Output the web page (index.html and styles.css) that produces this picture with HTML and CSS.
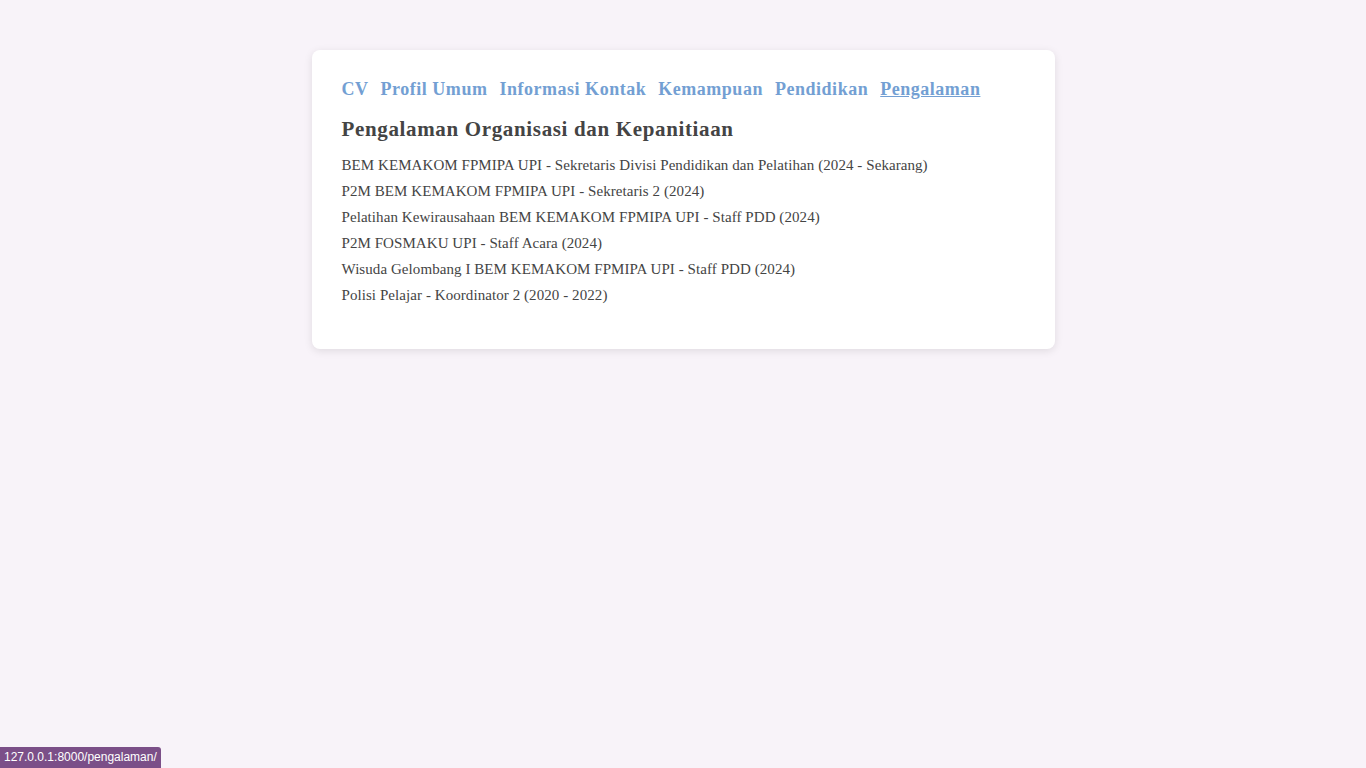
FILE: index.html
```html
<!DOCTYPE html>
<html lang="id">
<head>
<meta charset="utf-8">
<title>Pengalaman</title>
<link rel="stylesheet" href="styles.css">
</head>
<body>
<main class="card">
  <nav class="nav">
    <a href="#">CV</a>
    <a href="#">Profil Umum</a>
    <a href="#">Informasi Kontak</a>
    <a href="#">Kemampuan</a>
    <a href="#">Pendidikan</a>
    <a href="#" class="active">Pengalaman</a>
  </nav>
  <h2 class="title">Pengalaman Organisasi dan Kepanitiaan</h2>
  <ul class="list">
    <li>BEM KEMAKOM FPMIPA UPI - Sekretaris Divisi Pendidikan dan Pelatihan (2024 - Sekarang)</li>
    <li>P2M BEM KEMAKOM FPMIPA UPI - Sekretaris 2 (2024)</li>
    <li>Pelatihan Kewirausahaan BEM KEMAKOM FPMIPA UPI - Staff PDD (2024)</li>
    <li>P2M FOSMAKU UPI - Staff Acara (2024)</li>
    <li>Wisuda Gelombang I BEM KEMAKOM FPMIPA UPI - Staff PDD (2024)</li>
    <li>Polisi Pelajar - Koordinator 2 (2020 - 2022)</li>
  </ul>
</main>
<div class="status">127.0.0.1:8000/pengalaman/</div>
</body>
</html>
```
FILE: styles.css
```css
html, body {
  margin: 0;
  padding: 0;
}
body {
  background: #f8f3f9;
  font-family: "Liberation Serif", Georgia, serif;
  color: #444;
  min-height: 768px;
}
.card {
  width: 743px;
  box-sizing: border-box;
  margin: 50px auto 0;
  background: #fff;
  border-radius: 8px;
  box-shadow: 0 2px 8px rgba(0, 0, 0, 0.1);
  padding: 28px 29px 41px 30px;
}
.nav {
  display: flex;
  gap: 12px;
  font-weight: bold;
  font-size: 18px;
  line-height: 22px;
  letter-spacing: 0.52px;
}
.nav a {
  color: #739fd3;
  text-decoration: none;
}
.nav a.active {
  text-decoration: underline;
}
.title {
  margin: 16px 0 10px;
  font-size: 21px;
  line-height: 26px;
  font-weight: bold;
  letter-spacing: 0.65px;
  color: #444;
}
.list {
  list-style: none;
  margin: 0;
  padding: 0;
  font-size: 15px;
  line-height: 26px;
  letter-spacing: 0.07px;
}
.status {
  position: fixed;
  left: 0;
  bottom: 0;
  background: #7b4f88;
  color: #fff;
  font-family: "Liberation Sans", Arial, sans-serif;
  font-size: 12px;
  line-height: 21px;
  padding: 0 4px;
  border-top-right-radius: 3px;
}
```
